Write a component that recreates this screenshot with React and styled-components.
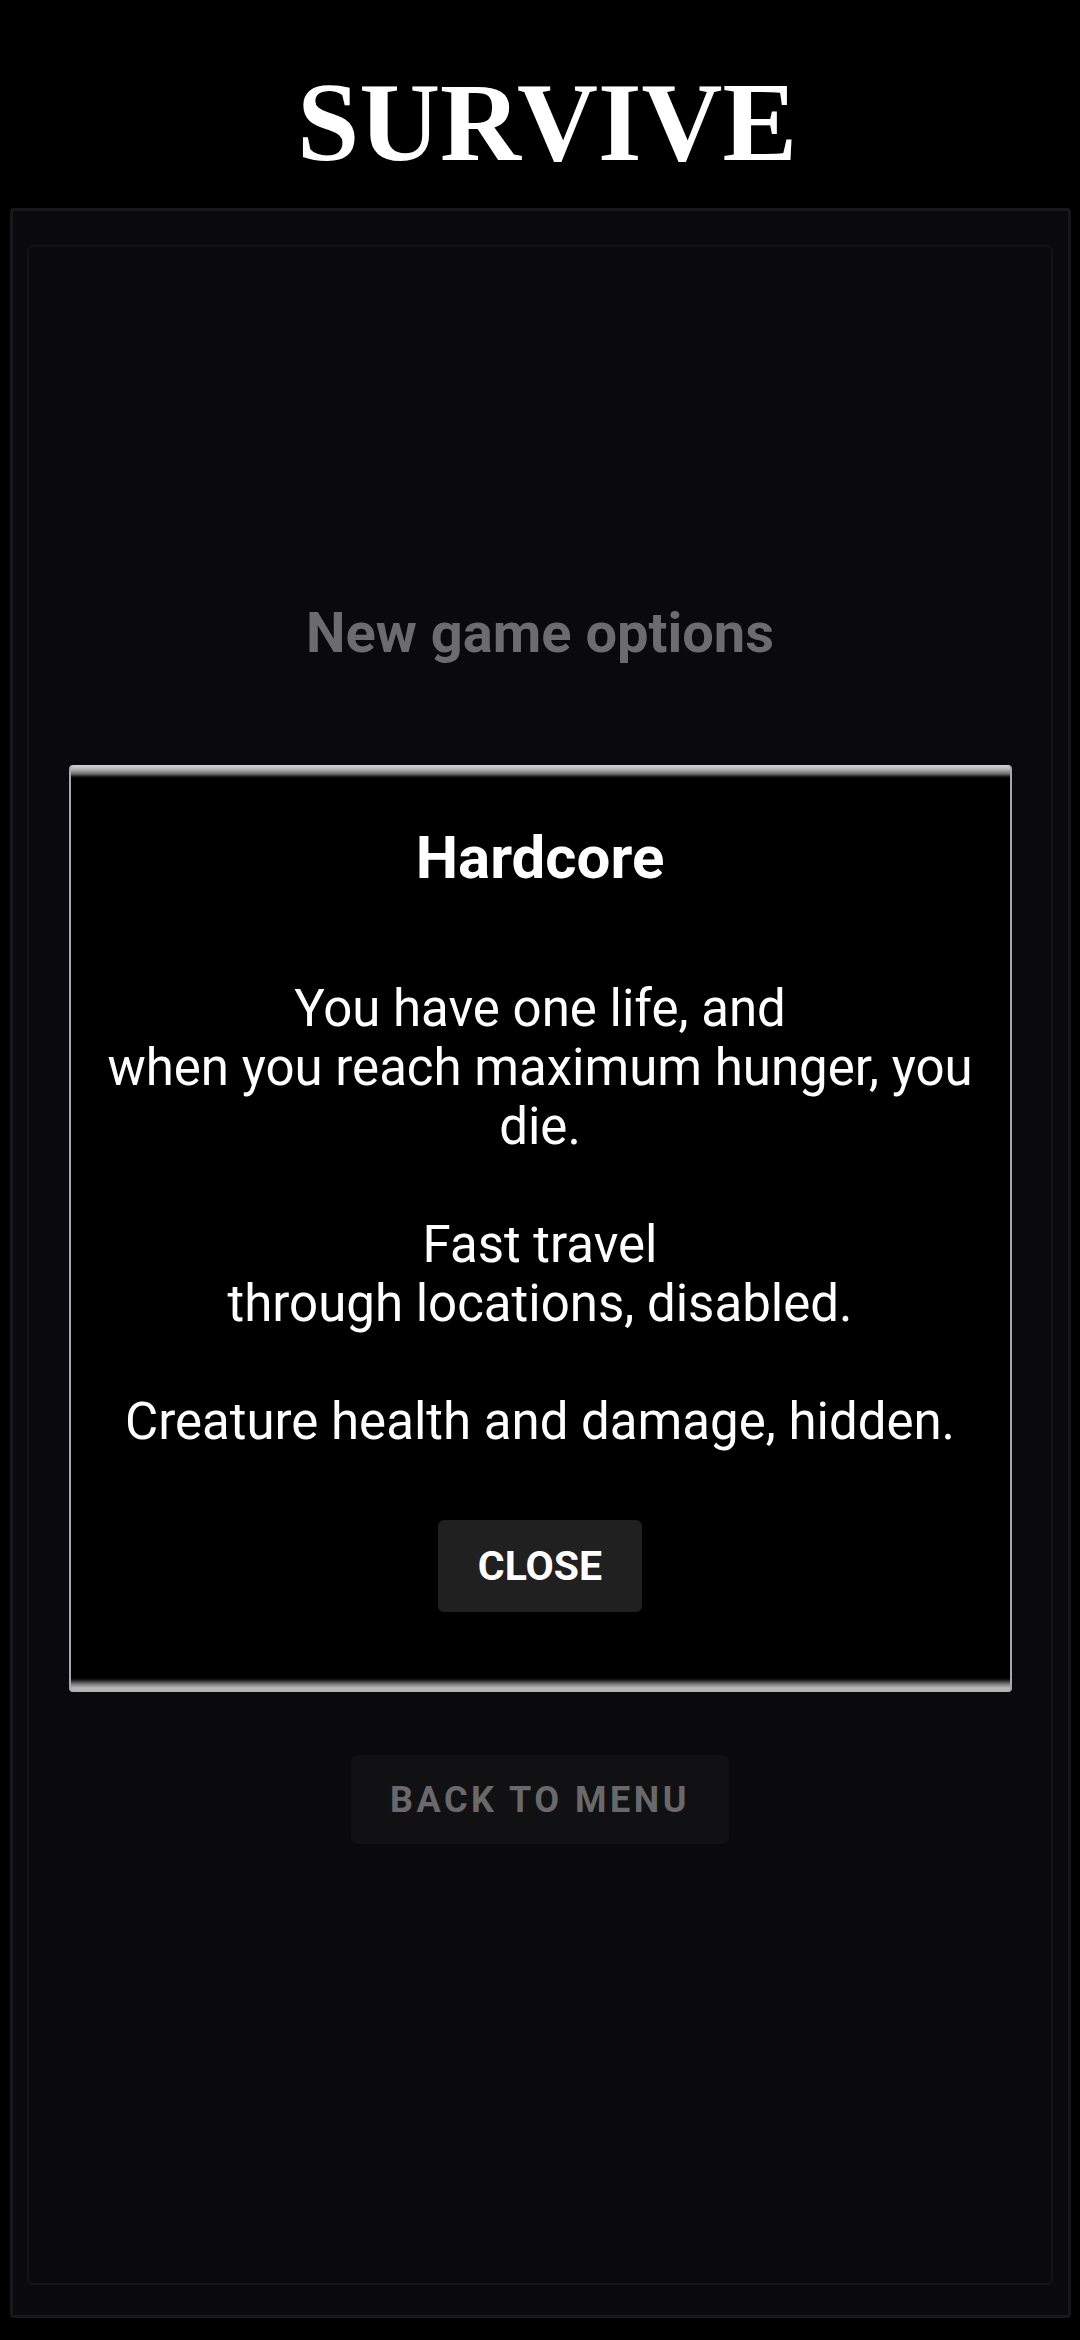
import React from "react";
import styled, { createGlobalStyle } from "styled-components";

const GlobalStyle = createGlobalStyle`
  * { box-sizing: border-box; }
  html, body { margin: 0; padding: 0; background: #000; }
  body { font-family: Roboto, "Liberation Sans", sans-serif; }
`;

const Modal = ({ title, children, onClose }) => (
  <ModalBox>
    <ModalTitle>{title}</ModalTitle>
    <ModalText>{children}</ModalText>
    <CloseButton onClick={onClose}>CLOSE</CloseButton>
  </ModalBox>
);

const App = () => {
  return (
    <>
      <GlobalStyle />
      <Screen>
        <Header>
          <Logo>SURVIVE</Logo>
        </Header>
        <Panel>
          <Inner>
            <Heading>New game options</Heading>
            <BackButton>BACK TO MENU</BackButton>
            <Modal title="Hardcore">
              {"You have one life, and\nwhen you reach maximum hunger, you die.\n\nFast travel\nthrough locations, disabled.\n\nCreature health and damage, hidden."}
            </Modal>
          </Inner>
        </Panel>
      </Screen>
    </>
  );
};

export default App;

const Screen = styled.div`
  width: 1080px;
  min-height: 2340px;
  background: #000;
  display: flex;
  flex-direction: column;
`;

const Header = styled.header`
  height: 192px;
  padding: 66px 0 0 14px;
  display: flex;
  justify-content: center;
`;

const Logo = styled.h1`
  margin: 0;
  font-family: "Liberation Serif", "Times New Roman", serif;
  font-weight: 700;
  font-size: 112px;
  line-height: 1;
  color: #fff;
`;

const Panel = styled.div`
  margin: 16px 9px 22px 10px;
  height: 2110px;
  background: #0a0a0c;
  border: 3px solid #18181b;
  border-radius: 4px;
  padding: 34px 15px 30px 14px;
  display: flex;
  flex-direction: column;
`;

const Inner = styled.div`
  flex: 1;
  position: relative;
  border: 2px solid #141417;
  border-radius: 6px;
  padding-top: 353px;
  display: flex;
  flex-direction: column;
  align-items: center;
`;

const Heading = styled.h2`
  margin: 0;
  font-size: 56px;
  font-weight: 700;
  line-height: 1.2;
  color: #6c6c6e;
`;

const BackButton = styled.button`
  margin-top: 1088px;
  width: 378px;
  height: 89px;
  border: none;
  border-radius: 6px;
  background: #111114;
  color: #69696b;
  font-family: Roboto, "Liberation Sans", sans-serif;
  font-size: 36px;
  font-weight: 700;
  letter-spacing: 3.5px;
  padding: 0;
`;

const ModalBox = styled.div`
  position: absolute;
  top: 518px;
  left: 0;
  right: 0;
  margin: 0 auto;
  width: 943px;
  height: 927px;
  padding: 57px 30px 0;
  display: flex;
  flex-direction: column;
  align-items: center;
  border-left: 2px solid #a8a8a8;
  border-right: 2px solid #a8a8a8;
  border-radius: 4px;
  background: linear-gradient(
    to bottom,
    #d2d2d2 0px,
    #b8b8b8 4px,
    #6a6a6a 9px,
    #0a0a0a 12px,
    #000 14px,
    #000 calc(100% - 14px),
    #1a1a1a calc(100% - 12px),
    #7a7a7a calc(100% - 8px),
    #b9b9b9 calc(100% - 4px),
    #b0b0b0 100%
  );
`;

const ModalTitle = styled.h3`
  margin: 0;
  font-size: 60px;
  font-weight: 700;
  line-height: 1.2;
  color: #fff;
`;

const ModalText = styled.p`
  margin: 85px 0 0;
  font-size: 51px;
  line-height: 59px;
  color: #fff;
  text-align: center;
  white-space: pre-line;
`;

const CloseButton = styled.button`
  margin-top: 69px;
  width: 204px;
  height: 92px;
  border: none;
  border-radius: 6px;
  background: #202020;
  color: #fff;
  font-family: Roboto, "Liberation Sans", sans-serif;
  font-size: 41px;
  font-weight: 700;
  padding: 0;
`;
